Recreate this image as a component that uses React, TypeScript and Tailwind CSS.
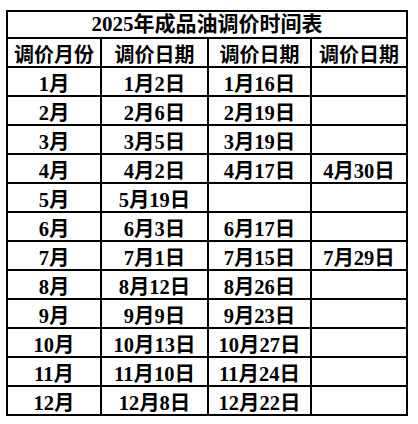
import React from "react";

const rows: [string, string, string, string][] = [
  ["1月", "1月2日", "1月16日", ""],
  ["2月", "2月6日", "2月19日", ""],
  ["3月", "3月5日", "3月19日", ""],
  ["4月", "4月2日", "4月17日", "4月30日"],
  ["5月", "5月19日", "", ""],
  ["6月", "6月3日", "6月17日", ""],
  ["7月", "7月1日", "7月15日", "7月29日"],
  ["8月", "8月12日", "8月26日", ""],
  ["9月", "9月9日", "9月23日", ""],
  ["10月", "10月13日", "10月27日", ""],
  ["11月", "11月10日", "11月24日", ""],
  ["12月", "12月8日", "12月22日", ""],
];

const font = {
  fontFamily: '"Liberation Serif", "Noto Sans CJK SC", serif',
};

export default function App() {
  return (
    <div className="w-[418px] h-[424px] bg-white pl-[6px] pt-[10px]" style={font}>
      <div className="grid w-[402px] grid-cols-[92px_105px_101px_94px] gap-[2px] bg-black p-[2px] text-[20px] font-bold leading-none text-black">
        <div className="col-span-4 flex h-[25px] items-end justify-center bg-white pb-[2px] text-[21px]">
          2025年成品油调价时间表
        </div>
        {["调价月份", "调价日期", "调价日期", "调价日期"].map((h, i) => (
          <div key={i} className="flex h-[27px] items-end justify-center bg-white pb-[1px]">
            {h}
          </div>
        ))}
        {rows.map((r, i) =>
          r.map((c, j) => (
            <div key={`${i}-${j}`} className="flex h-[27px] items-end justify-center bg-white pb-[1px] text-[20.5px]">
              {c}
            </div>
          ))
        )}
      </div>
    </div>
  );
}
